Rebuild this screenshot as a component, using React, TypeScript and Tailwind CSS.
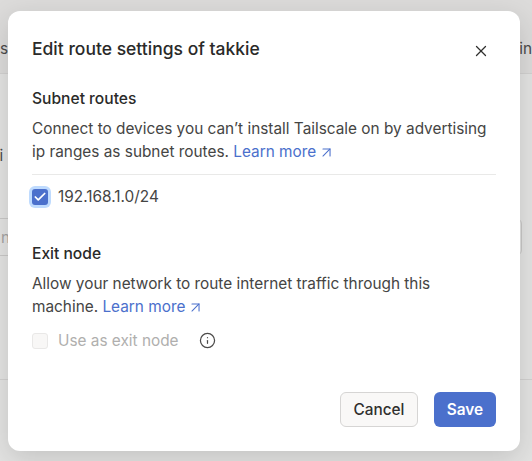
import { X, Check, ArrowUpRight, Info } from "lucide-react";
import React from "react";

function LearnMore() {
  return (
    <a className="text-[#4b70cc] whitespace-nowrap">
      Learn more <ArrowUpRight className="inline h-[17px] w-[17px] -ml-[3px] -mt-px" strokeWidth={1.5} />
    </a>
  );
}

export default function App() {
  return (
    <div className="relative h-[461px] w-[532px] overflow-hidden bg-[#e3e3e2] text-[#454544] font-['Inter',sans-serif] text-[15.36px] leading-[23px]">
      {/* page behind the dialog */}
      <div className="flex h-[74px] justify-between border-b border-[#d2d1d0] bg-[#dcdbda] pt-[37px] text-[#4c4b4a]">
        <span>s</span>
        <span>in</span>
      </div>
      <div className="pt-[70px] text-[#4c4b4a]">
        <span className="-ml-[9px]">ai</span>
      </div>
      <div className="-ml-2 mt-[51px] h-[38px] w-[530px] rounded-md border border-[#c9c8c7] pl-2 pt-[7px] text-[#a5a4a3]">
        n
      </div>
      <div className="mt-[123px] border-t border-[#d2d1d0]" />

      {/* dialog */}
      <div className="absolute left-2 top-[11px] flex h-[440px] w-[512px] flex-col rounded-xl bg-white px-6 pb-6 pt-6 shadow-[0_8px_28px_rgba(0,0,0,0.14)]">
        <div className="flex items-center justify-between">
          <h1 className="text-[17.5px] leading-7 font-medium text-[#2a2a29]">Edit route settings of takkie</h1>
          <button className="mr-1.5 mt-[3px] text-[#2f2f2e]">
            <X className="h-[18px] w-[18px]" strokeWidth={1.75} />
          </button>
        </div>

        <h2 className="mt-6 text-[15.6px] font-medium text-[#2a2a29]">Subnet routes</h2>
        <p className="mt-[7px]">
          Connect to devices you can’t install Tailscale on by advertising ip ranges as subnet routes. <LearnMore />
        </p>
        <div className="mt-[11px] border-t border-[#e9e9e8]" />
        <label className="mt-2.5 flex items-center gap-2.5">
          <span className="flex h-4 w-4 items-center justify-center rounded-[3px] bg-[#4b70cc] ring-[3px] ring-[#bfdbfe]">
            <Check className="h-[14px] w-[14px] text-white" strokeWidth={3} />
          </span>
          192.168.1.0/24
        </label>

        <h2 className="mt-[34px] text-[15.6px] font-medium text-[#2a2a29]">Exit node</h2>
        <p className="mt-[7px]">
          Allow your network to route internet traffic through this
          <br />
          machine. <LearnMore />
        </p>
        <label className="mt-[11px] flex items-center gap-2.5 text-[#b0afae]">
          <span className="h-4 w-4 rounded-[3px] border border-[#e9e8e7] bg-[#f8f7f6]" />
          Use as exit node
          <Info className="ml-[10px] h-[17px] w-[17px] text-[#4c4b4a]" strokeWidth={1.75} />
        </label>

        <div className="mt-auto flex justify-end gap-4">
          <button className="h-[35px] w-[78px] rounded-md border border-[#d6d5d4] bg-[#f9f8f7] font-medium text-[#2f2f2e]">
            Cancel
          </button>
          <button className="h-[35px] w-[62px] rounded-md bg-[#4b70cc] font-semibold text-white">Save</button>
        </div>
      </div>
    </div>
  );
}
